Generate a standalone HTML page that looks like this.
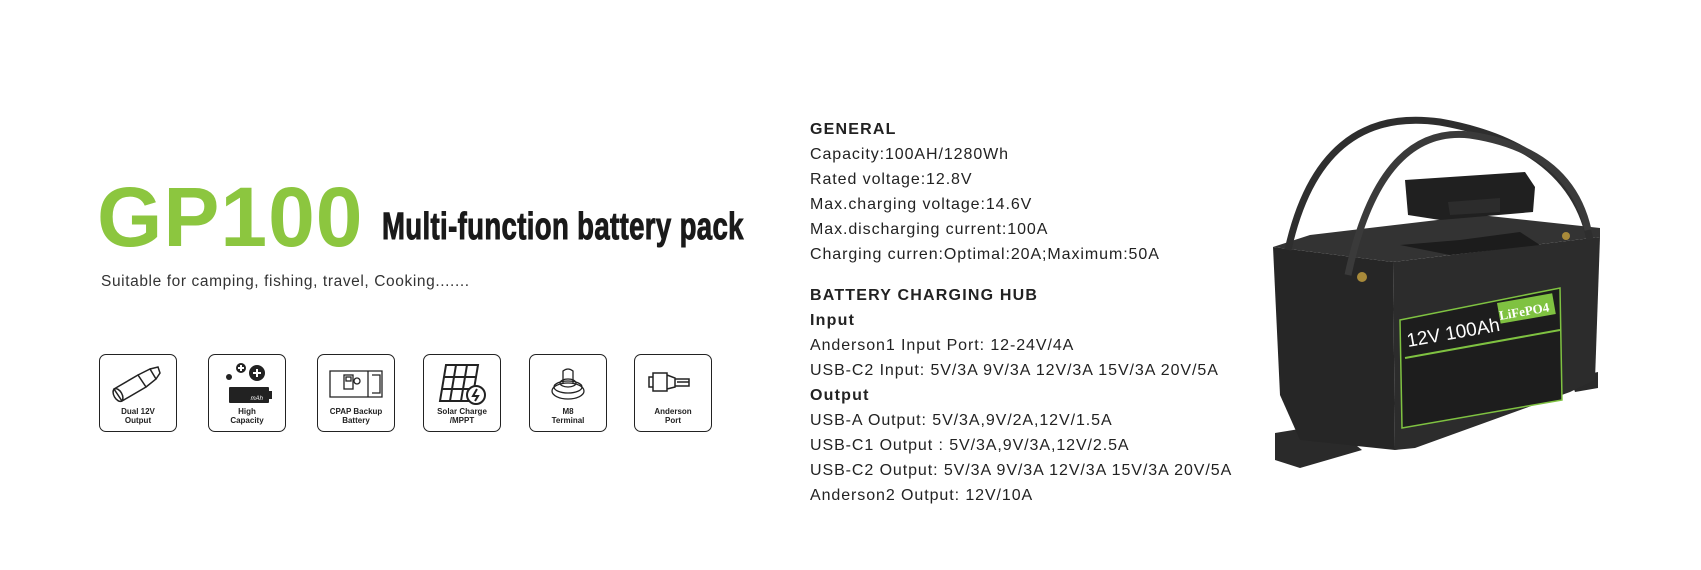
<!DOCTYPE html>
<html><head><meta charset="utf-8"><style>
body{margin:0;width:1701px;height:570px;background:#fff;position:relative;overflow:hidden;font-family:"Liberation Sans",sans-serif;color:#222}
.gp{position:absolute;left:97px;top:167px;font-size:84px;font-weight:bold;color:#8cc63f;letter-spacing:1px;line-height:100px}
.tt{position:absolute;left:382px;top:207px;font-family:"Liberation Sans Narrow","Liberation Sans",sans-serif;font-weight:bold;font-size:38px;line-height:40px;color:#1a1a1a;transform:scaleX(.725);transform-origin:left top;white-space:nowrap;-webkit-text-stroke:1px #1a1a1a;letter-spacing:.5px}
.sub{position:absolute;left:101px;top:273px;font-size:15.5px;letter-spacing:.6px;color:#333}
.box{position:absolute;top:354px;width:76px;height:76px;border:1.5px solid #222;border-radius:7px}
.box .l{position:absolute;left:0;right:0;bottom:6px;text-align:center;font-size:8px;font-weight:bold;line-height:9px}
.box svg{position:absolute;left:8px;top:4px}
.col{position:absolute;left:810px;top:117px;font-size:16px;letter-spacing:.92px;line-height:25px;color:#222}
.col b{letter-spacing:1.2px}
</style></head><body>
<div class="gp">GP100</div>
<div class="tt">Multi-function battery pack</div>
<div class="sub">Suitable for camping, fishing, travel, Cooking.......</div>

<div class="box" style="left:99px"><svg width="60" height="48" viewBox="0 0 60 48" fill="none" stroke="#222" stroke-width="1.5"><path d="M6 30 L30 16 L38 28 L14 42 Z"/><ellipse cx="10" cy="36" rx="4" ry="7" transform="rotate(-30 10 36)"/><path d="M30 16 L42 10 L48 20 L38 28"/><path d="M42 10 L50 8 L52 14 L48 20"/></svg><div class="l">Dual 12V<br>Output</div></div>

<div class="box" style="left:208px"><svg width="60" height="48" viewBox="0 0 60 48"><circle cx="12" cy="18" r="3" fill="#222"/><circle cx="24" cy="9" r="5" fill="#222"/><circle cx="40" cy="14" r="8" fill="#222"/><path d="M36 14h8M40 10v8M21 9h6M24 6v6" stroke="#fff" stroke-width="2"/><rect x="12" y="28" width="40" height="16" rx="1" fill="#222"/><rect x="52" y="32" width="3" height="8" fill="#222"/><text x="46" y="41" font-size="6" fill="#fff" text-anchor="end" font-style="italic">mAh</text></svg><div class="l">High<br>Capacity</div></div>

<div class="box" style="left:317px"><svg width="60" height="48" viewBox="0 0 60 48" fill="none" stroke="#222" stroke-width="1.3"><path d="M4 12 L56 12 L56 38 L4 38 Z"/><rect x="18" y="16" width="9" height="14"/><rect x="20" y="18" width="5" height="4"/><circle cx="31" cy="22" r="3"/><path d="M42 12v26M46 16h8v18h-8"/></svg><div class="l">CPAP Backup<br>Battery</div></div>

<div class="box" style="left:423px"><svg width="60" height="48" viewBox="0 0 60 48" fill="none" stroke="#222" stroke-width="2"><path d="M14 6 H46 L40 42 H8 Z"/><path d="M12 18 H44 M10 30 H42 M24 6 L18 42 M35 6 L29 42"/><circle cx="44" cy="36" r="9" fill="#fff"/><path d="M45 30 L41 37 H46 L43 42" stroke-width="2"/></svg><div class="l">Solar Charge<br>/MPPT</div></div>

<div class="box" style="left:529px"><svg width="60" height="48" viewBox="0 0 60 48" fill="none" stroke="#222" stroke-width="1.3"><ellipse cx="30" cy="32" rx="16" ry="8"/><ellipse cx="30" cy="28" rx="14" ry="6"/><ellipse cx="30" cy="24" rx="8" ry="4"/><path d="M25 24 V12 Q30 8 35 12 V24"/></svg><div class="l">M8<br>Terminal</div></div>

<div class="box" style="left:634px"><svg width="60" height="48" viewBox="0 0 60 48" fill="none" stroke="#222" stroke-width="1.5"><path d="M10 14 H24 V32 H10 Z M10 18 H6 V28 H10 M24 16 L32 19 V28 L24 30 M32 20 H46 V27 H32 M34 23 H46"/></svg><div class="l">Anderson<br>Port</div></div>

<div class="col">
<b>GENERAL</b><br>
Capacity:100AH/1280Wh<br>
Rated voltage:12.8V<br>
Max.charging voltage:14.6V<br>
Max.discharging current:100A<br>
Charging curren:Optimal:20A;Maximum:50A<br>
<div style="height:16px"></div>
<b>BATTERY CHARGING HUB</b><br>
<b>Input</b><br>
Anderson1 Input Port: 12-24V/4A<br>
USB-C2 Input: 5V/3A 9V/3A 12V/3A 15V/3A 20V/5A<br>
<b>Output</b><br>
USB-A Output: 5V/3A,9V/2A,12V/1.5A<br>
USB-C1 Output : 5V/3A,9V/3A,12V/2.5A<br>
USB-C2 Output: 5V/3A 9V/3A 12V/3A 15V/3A 20V/5A<br>
Anderson2 Output: 12V/10A
</div>

<svg style="position:absolute;left:0;top:0" width="1701" height="570" viewBox="0 0 1701 570">
<path d="M1275 433 L1330 424 L1362 450 L1300 468 L1275 460 Z" fill="#2a2a2a"/>
<path d="M1570 378 L1598 372 L1598 388 L1575 392 Z" fill="#2a2a2a"/>
<path d="M1273 247 L1393 262 L1395 450 L1300 440 L1280 395 Z" fill="#262626"/>
<path d="M1393 262 L1600 237 L1595 380 L1570 392 L1415 448 L1395 450 Z" fill="#2c2c2c"/>
<path d="M1273 247 L1310 235 L1480 215 L1600 228 L1600 237 L1393 262 Z" fill="#333"/>
<path d="M1400 245 L1460 240 L1520 232 L1540 245 L1450 255 Z" fill="#1c1c1c"/>
<path d="M1400 320 L1560 288 L1562 400 L1402 428 Z" fill="#1d1d1d" stroke="#7fc241" stroke-width="1.5"/>
<text x="1408" y="347" font-size="19" fill="#fff" font-family="Liberation Sans Narrow,Liberation Sans,sans-serif" transform="rotate(-10 1408 347)">12V 100Ah</text>
<rect x="1497" y="303" width="56" height="21" fill="#7fc241" transform="rotate(-10 1497 303)"/>
<text x="1500" y="320" font-size="13" fill="#fff" font-family="Liberation Serif,serif" font-weight="bold" transform="rotate(-10 1500 320)">LiFePO4</text>
<path d="M1405 358 L1560 330" stroke="#7fc241" stroke-width="2"/>
<path d="M1405 180 L1525 172 L1535 187 L1533 212 L1440 220 L1408 215 Z" fill="#202020"/>
<path d="M1448 202 L1500 198 L1500 212 L1450 215 Z" fill="#2c2c2c"/>
<path d="M1288 250 Q1320 105 1440 122 Q1570 145 1590 240" fill="none" stroke="#2e2e2e" stroke-width="7"/>
<path d="M1348 275 Q1380 125 1470 135 Q1570 150 1588 230" fill="none" stroke="#3a3a3a" stroke-width="7"/>
<circle cx="1362" cy="277" r="5" fill="#a88a3a"/>
<circle cx="1566" cy="236" r="4" fill="#a88a3a"/>
</svg>
</body></html>
